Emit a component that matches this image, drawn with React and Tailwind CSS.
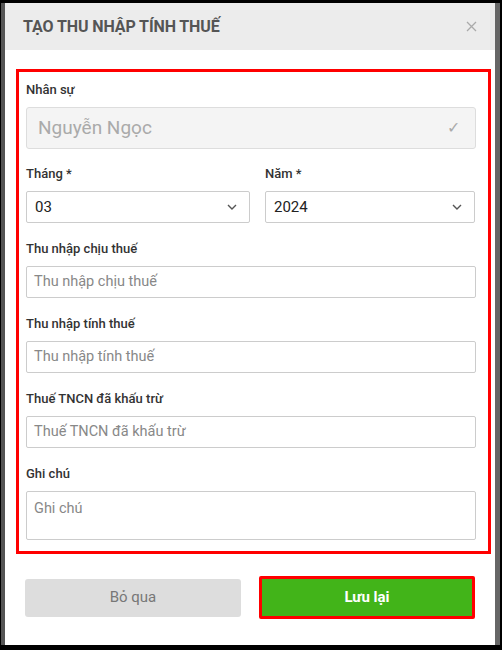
import React from "react";

function Label({ children }) {
  return <div className="h-[16px] text-[13px] leading-[16px] font-medium text-[#333] mb-[9px]">{children}</div>;
}

function Chevron() {
  return (
    <svg width="10" height="6" viewBox="0 0 10 6" className="text-[#555]">
      <path d="M1 1l4 4 4-4" fill="none" stroke="currentColor" strokeWidth="1.4" />
    </svg>
  );
}

function SelectBox({ value }) {
  return (
    <div className="h-[32px] border border-[#ccc] rounded-[2px] bg-white flex items-center justify-between pl-[8px] pr-[12px]">
      <span className="text-[15px] text-[#222]">{value}</span>
      <Chevron />
    </div>
  );
}

function TextField({ placeholder }) {
  return (
    <div className="h-[32px] border border-[#ccc] rounded-[2px] bg-white flex items-center px-[7px]">
      <span className="text-[14.5px] text-[#888]">{placeholder}</span>
    </div>
  );
}

export default function App() {
  return (
    <div
      className="w-[502px] h-[650px] bg-black pt-[3px] pl-[1px] pr-[2px] pb-[5px] flex overflow-hidden"
      style={{ fontFamily: "Roboto, 'Liberation Sans', sans-serif" }}
    >
      <div className="w-[4px] bg-[#555]" />
      <div className="w-[490px] bg-white flex flex-col">
        <div className="h-[47px] bg-[#ececec] flex items-center justify-between pl-[18px] pr-[18px]">
          <span className="text-[16px] font-bold text-[#555] tracking-[-0.1px]">TẠO THU NHẬP TÍNH THUẾ</span>
          <svg width="11" height="11" viewBox="0 0 11 11">
            <path d="M1 1l9 9M10 1l-9 9" stroke="#aaa" strokeWidth="1.3" />
          </svg>
        </div>

        <div className="mt-[19px] ml-[11px] mr-[4px] border-[3px] border-[#ff0000] pt-[10px] pb-[11px] pl-[7px] pr-[12px]">
          <Label>Nhân sự</Label>
          <div className="h-[42px] border border-[#ddd] rounded-[3px] bg-[#f4f4f4] flex items-center justify-between pl-[11px] pr-[15px] mb-[17px]">
            <span className="text-[19px] text-[#aaa]">Nguyễn Ngọc</span>
            <span className="text-[16px] text-[#aaa]">✓</span>
          </div>

          <div className="grid grid-cols-[224px_210px] gap-x-[15px] mb-[18px]">
            <div>
              <Label>Tháng *</Label>
              <SelectBox value="03" />
            </div>
            <div>
              <Label>Năm *</Label>
              <SelectBox value="2024" />
            </div>
          </div>

          <Label>Thu nhập chịu thuế</Label>
          <div className="mb-[18px]"><TextField placeholder="Thu nhập chịu thuế" /></div>

          <Label>Thu nhập tính thuế</Label>
          <div className="mb-[18px]"><TextField placeholder="Thu nhập tính thuế" /></div>

          <Label>Thuế TNCN đã khấu trừ</Label>
          <div className="mb-[18px]"><TextField placeholder="Thuế TNCN đã khấu trừ" /></div>

          <Label>Ghi chú</Label>
          <div className="h-[49px] border border-[#ccc] rounded-[2px] bg-white px-[7px] pt-[4px]">
            <span className="text-[14.5px] text-[#888]">Ghi chú</span>
          </div>
        </div>

        <div className="mt-[22px] px-[20px] flex items-center gap-[18px]">
          <div className="w-[216px] h-[38px] bg-[#dddddd] rounded-[3px] flex items-center justify-center text-[15px] text-[#777]">
            Bỏ qua
          </div>
          <div className="w-[216px] h-[43px] bg-[#42b419] border-[3px] border-[#ff0000] rounded-[2px] flex items-center justify-center text-[15px] font-bold text-white">
            Lưu lại
          </div>
        </div>
      </div>
      <div className="w-[5px] bg-[#666]" />
    </div>
  );
}
